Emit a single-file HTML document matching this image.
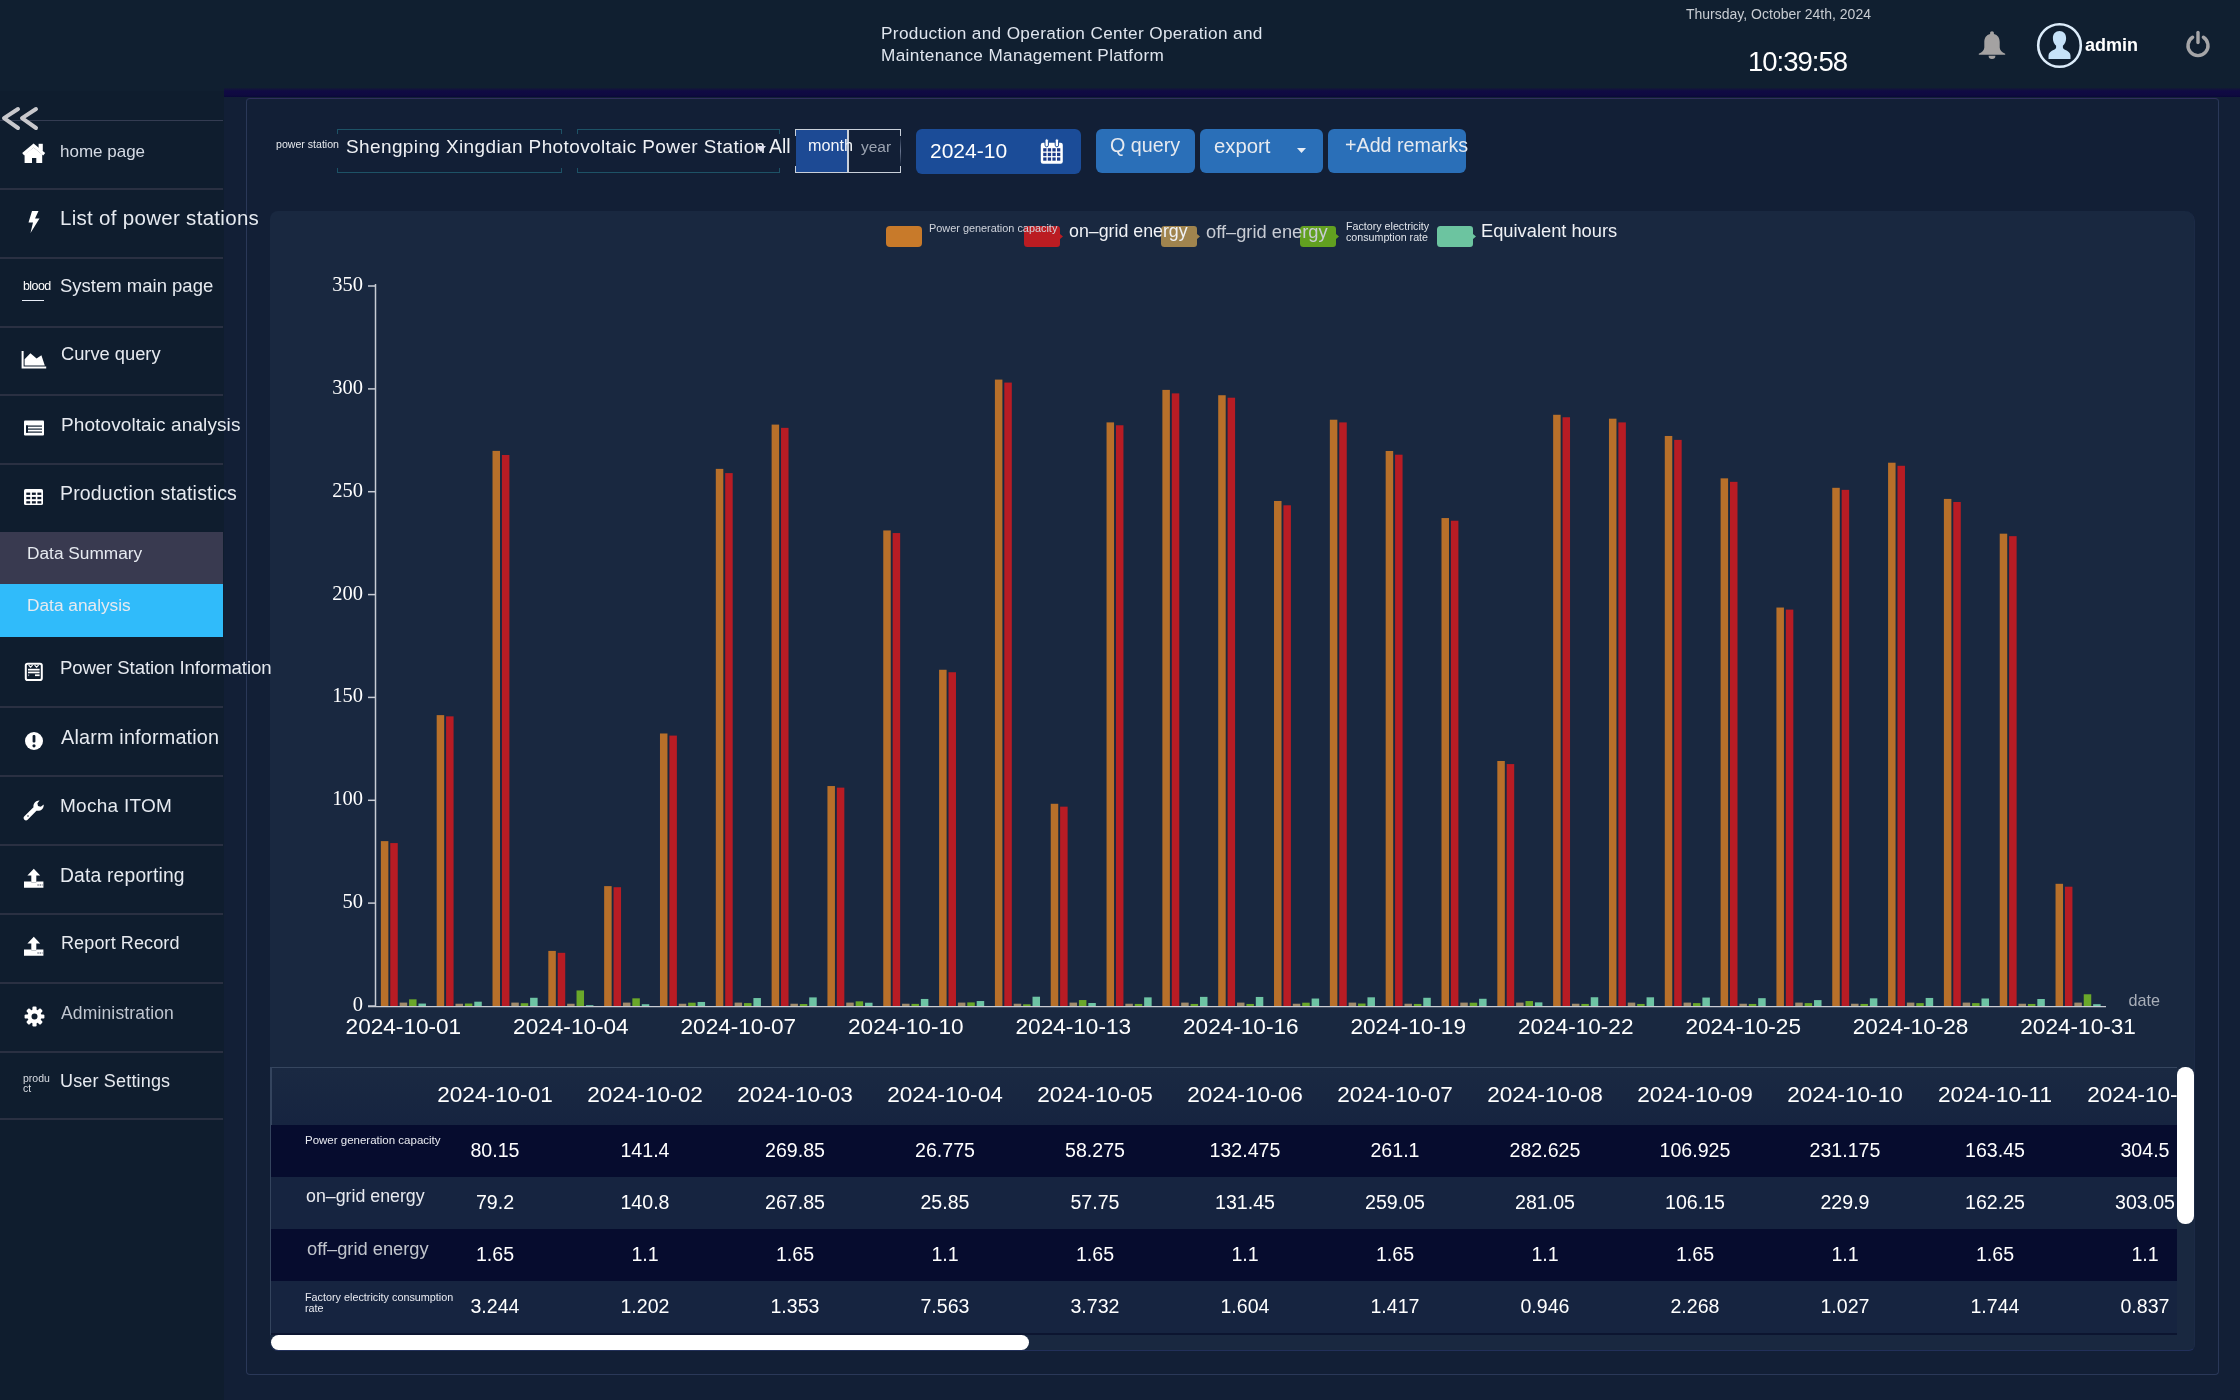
<!DOCTYPE html>
<html><head><meta charset="utf-8">
<style>
*{margin:0;padding:0;box-sizing:border-box}
html,body{width:2240px;height:1400px;overflow:hidden;background:#111e33;font-family:"Liberation Sans",sans-serif;color:#fff}
#wrap{position:absolute;left:0;top:0;width:2240px;height:1400px;will-change:transform}
.abs{position:absolute;white-space:nowrap}
#header{position:absolute;left:0;top:0;width:2240px;height:91px;background:#101f30}
#band{position:absolute;left:224px;top:88px;width:2016px;height:10px;background:linear-gradient(#121a34 0%,#100a44 30%,#0f0a40 70%,#080838 92%,#101838 100%)}
#sidebar{position:absolute;left:0;top:91px;width:224px;height:1309px;background:#0f1d2e}
.sep{position:absolute;left:0;width:223px;height:2px;background:#2a3042}
.st{position:absolute;white-space:nowrap;color:#e6eaf0;line-height:1}
.ic{position:absolute}
#main{position:absolute;left:224px;top:97px;width:2016px;height:1303px;background:#121f36}
#panel{position:absolute;left:246px;top:98px;width:1973px;height:1277px;border:1px solid #2a3858;border-top:1.5px solid #30305c;border-radius:4px}
#chartbg{position:absolute;left:270px;top:211px;width:1925px;height:1140px;background:#192840;border-right:1px solid #1c2a46;border-bottom:1px solid #22305a;border-radius:8px 10px 6px 8px}
.btn{position:absolute;top:129px;height:44px;background:#2a6fb8;border-radius:6px;color:#fff}
.row{position:absolute;left:271px;width:1906px;height:52px}
.cell{position:absolute;width:150px;text-align:center;font-size:20px;color:#fff;line-height:1}
.lg{position:absolute;top:226px;width:36px;height:21px;border-radius:5px}
</style></head>
<body><div id="wrap">
<div id="header">
  <div class="abs" style="left:881px;top:21.8px;font-size:17.2px;letter-spacing:0.35px;line-height:22px;color:#dfe5ee">Production and Operation Center Operation and<br>Maintenance Management Platform</div>
  <div class="abs" style="left:1686px;top:6px;font-size:14px;color:#c8ccd2">Thursday, October 24th, 2024</div>
  <div class="abs" style="left:1748px;top:46px;font-size:27.5px;color:#fff;letter-spacing:-1.0px">10:39:58</div>
  <!-- bell -->
  <svg class="ic" style="left:1977px;top:30px" width="30" height="30" viewBox="0 0 30 30"><path d="M15 1.2c1.1 0 1.9.8 1.9 1.8v.9c3.9.9 5.8 4 5.8 8.2v5.3c0 2.6 2 4.4 5.5 6.4v.9H1.8v-.9c3.5-2 5.5-3.8 5.5-6.4v-5.3c0-4.2 1.9-7.3 5.8-8.2V3c0-1 .8-1.8 1.9-1.8z" fill="#a4a2a2"/><path d="M11.6 25.8h6.8a3.4 3.2 0 0 1-6.8 0z" fill="#a4a2a2"/></svg>
  <!-- avatar -->
  <svg class="ic" style="left:2036px;top:22px" width="48" height="48" viewBox="0 0 48 48"><circle cx="23.5" cy="23.5" r="21.3" fill="none" stroke="#dcecfa" stroke-width="2.6"/><path d="M23.5 9c4 0 6.6 3 6.6 7.3 0 3.2-1.2 5.8-3.2 7.4v1.6c0 1 .6 1.6 1.6 2.1 3.9 1.6 6 3.3 6 6.4v3.2H12.5v-3.2c0-3.1 2.1-4.8 6-6.4 1-.5 1.6-1.1 1.6-2.1v-1.6c-2-1.6-3.2-4.2-3.2-7.4 0-4.3 2.6-7.3 6.6-7.3z" fill="#c6e2f8"/></svg>
  <div class="abs" style="left:2085px;top:35px;font-size:18px;font-weight:bold;color:#fff">admin</div>
  <!-- power -->
  <svg class="ic" style="left:2183px;top:29px" width="30" height="30" viewBox="0 0 30 30"><path d="M9.6 8.2A10 10 0 1 0 20.4 8.2" fill="none" stroke="#a6a6a8" stroke-width="3.4" stroke-linecap="round"/><line x1="15" y1="3.5" x2="15" y2="13.5" stroke="#a6a6a8" stroke-width="3.4" stroke-linecap="round"/></svg>
</div>
<div id="band"></div>
<div id="sidebar"></div>
<div id="main"></div>
<div id="panel"></div>
<div id="chartbg"></div>

<!-- SIDEBAR CONTENT -->

<div class="sep" style="top:120px;height:1.2px;left:0;width:223px;background:#343c52"></div>
<svg class="ic" style="left:-1px;top:105px" width="40" height="28" viewBox="0 0 40 28"><path d="M19 4L5 13.2 19 23M37 4L23 13.2 37 23" fill="none" stroke="#c8c8cc" stroke-width="4" stroke-linecap="round" stroke-linejoin="round"/></svg>
<div class="sep" style="top:188px"></div>
<div class="sep" style="top:257px"></div>
<div class="sep" style="top:326px"></div>
<div class="sep" style="top:394px"></div>
<div class="sep" style="top:463px"></div>
<div class="abs" style="left:0;top:532px;width:223px;height:52px;background:#393a50"></div>
<div class="abs" style="left:0;top:584px;width:223px;height:53px;background:#30bbfa"></div>
<div class="sep" style="top:706px"></div>
<div class="sep" style="top:775px"></div>
<div class="sep" style="top:844px"></div>
<div class="sep" style="top:913px"></div>
<div class="sep" style="top:982px"></div>
<div class="sep" style="top:1051px"></div>
<div class="sep" style="top:1118px"></div>

<div class="st" style="left:60px;top:143px;font-size:17px;color:#d4dae4">home page</div>
<div class="st" style="left:60px;top:208px;font-size:20.5px;letter-spacing:0.3px">List of power stations</div>
<div class="st" style="left:60px;top:277px;font-size:18.5px">System main page</div>
<div class="st" style="left:61px;top:345px;font-size:18.3px">Curve query</div>
<div class="st" style="left:61px;top:415px;font-size:19px;letter-spacing:0.1px">Photovoltaic analysis</div>
<div class="st" style="left:60px;top:484px;font-size:19.5px;letter-spacing:0.17px">Production statistics</div>
<div class="st" style="left:27px;top:545px;font-size:17.3px">Data Summary</div>
<div class="st" style="left:27px;top:597px;font-size:17.3px">Data analysis</div>
<div class="st" style="left:60px;top:658.5px;font-size:18.6px;letter-spacing:-0.1px">Power Station Information</div>
<div class="st" style="left:61px;top:727.5px;font-size:19.8px;letter-spacing:0.19px">Alarm information</div>
<div class="st" style="left:60px;top:796px;font-size:19px;letter-spacing:0.27px">Mocha ITOM</div>
<div class="st" style="left:60px;top:865.5px;font-size:19.3px;letter-spacing:0.18px">Data reporting</div>
<div class="st" style="left:61px;top:934px;font-size:18px;letter-spacing:0.12px">Report Record</div>
<div class="st" style="left:61px;top:1004.5px;font-size:17.5px;letter-spacing:0.15px;color:#c0c6d0">Administration</div>
<div class="st" style="left:60px;top:1072px;font-size:18px;letter-spacing:0.17px">User Settings</div>

<!-- sidebar icons -->
<svg class="ic" style="left:21px;top:141px" width="26" height="23" viewBox="0 0 26 23"><rect x="17.6" y="2.8" width="4.2" height="7" fill="#fff"/><path d="M2.2 13.2L12.6 4.6 23.2 13.2" fill="none" stroke="#fff" stroke-width="3.2"/><path d="M3.6 13.4L12.6 6.4 21.2 13.4V22H15.3V17H11V22H3.6z" fill="#fff"/></svg>
<svg class="ic" style="left:27px;top:210px" width="14" height="24" viewBox="0 0 14 24"><path d="M5 1h6.5L8 8.5h4.5L3.5 23 6 12.5H1.5z" fill="#fff"/></svg>
<div class="st" style="left:23px;top:280px;font-size:12.5px;letter-spacing:-0.6px;color:#fff">blood</div>
<div class="abs" style="left:22px;top:299.6px;width:22px;height:1.2px;background:#e8eef8"></div>
<svg class="ic" style="left:21px;top:349px" width="26" height="21" viewBox="0 0 26 21"><path d="M1.6 2v16.4H25.2" fill="none" stroke="#fff" stroke-width="2"/><path d="M3.6 16.6V10.2L9.4 4.2 15.6 9.6 20.4 6.2 23.8 16.6z" fill="#fff"/></svg>
<svg class="ic" style="left:23px;top:419px" width="22" height="18" viewBox="0 0 22 18"><rect x="1" y="1.5" width="20" height="15" rx="1" fill="#fff"/><rect x="3" y="6.5" width="16" height="1.2" fill="#0f1d2e"/><rect x="3" y="9.5" width="16" height="1.2" fill="#0f1d2e"/><rect x="3" y="12.5" width="16" height="1.2" fill="#0f1d2e"/><rect x="3" y="6.5" width="2" height="7.2" fill="#0f1d2e"/></svg>
<svg class="ic" style="left:24px;top:489px" width="20" height="17" viewBox="0 0 20 17"><rect x="0" y="0" width="19" height="16" rx="1.6" fill="#fff"/><rect x="2.3" y="3.6" width="3.9" height="2.3" fill="#0f1a2c"/><rect x="2.3" y="7.9" width="3.9" height="2.3" fill="#0f1a2c"/><rect x="2.3" y="12.2" width="3.9" height="2.3" fill="#0f1a2c"/><rect x="7.9" y="3.6" width="3.9" height="2.3" fill="#0f1a2c"/><rect x="7.9" y="7.9" width="3.9" height="2.3" fill="#0f1a2c"/><rect x="7.9" y="12.2" width="3.9" height="2.3" fill="#0f1a2c"/><rect x="13.4" y="3.6" width="3.9" height="2.3" fill="#0f1a2c"/><rect x="13.4" y="7.9" width="3.9" height="2.3" fill="#0f1a2c"/><rect x="13.4" y="12.2" width="3.9" height="2.3" fill="#0f1a2c"/></svg>
<svg class="ic" style="left:24px;top:662px" width="20" height="20" viewBox="0 0 20 20"><rect x="1.8" y="1.8" width="16" height="16.2" rx="1.8" fill="none" stroke="#fff" stroke-width="2"/><path d="M4.6 3.2l2 2 2-2M10.6 3.2l2 2 2-2" fill="none" stroke="#fff" stroke-width="1.2"/><rect x="4" y="6.8" width="11.6" height="1.7" fill="#fff"/><rect x="4" y="9.6" width="11.6" height="1.7" fill="#fff"/><rect x="11" y="12.4" width="4.6" height="1.7" fill="#fff"/><rect x="4" y="12.4" width="1.2" height="1.7" fill="#8890a0"/></svg>
<svg class="ic" style="left:24px;top:731px" width="20" height="20" viewBox="0 0 20 20"><circle cx="10" cy="10" r="9" fill="#fff"/><rect x="8.6" y="4" width="2.8" height="7.5" rx="1" fill="#0f1d2e"/><circle cx="10" cy="14.8" r="1.6" fill="#0f1d2e"/></svg>
<svg class="ic" style="left:23px;top:799px" width="22" height="22" viewBox="0 0 22 22"><path d="M3 19l8.6-8.6" stroke="#fff" stroke-width="4.6" stroke-linecap="round"/><path d="M16.6 1.6a5.6 5.6 0 0 0-5.9 7.4l2.4 2.4a5.6 5.6 0 0 0 7.6-5.8l-2.9 2.2-2.8-.9-.6-2.6z" fill="#fff"/><circle cx="5" cy="17" r="0.8" fill="#0f1d2e"/></svg>
<svg class="ic" style="left:23px;top:866px" width="22" height="23" viewBox="0 0 22 23"><path d="M10.8 2.8L4.4 9.6h3.9v6.4h5V9.6h3.9z" fill="#fff"/><path d="M1 15.6h7.3v.6h5v-.6h7.1v6.1H1z" fill="#fff"/><path d="M14.4 19h1.4M16.6 19h1.4M18.8 19h.8" stroke="#3a4458" stroke-width="1.2"/></svg>
<svg class="ic" style="left:23px;top:934px" width="22" height="23" viewBox="0 0 22 23"><path d="M10.8 2.8L4.4 9.6h3.9v6.4h5V9.6h3.9z" fill="#fff"/><path d="M1 15.6h7.3v.6h5v-.6h7.1v6.1H1z" fill="#fff"/><path d="M14.4 19h1.4M16.6 19h1.4M18.8 19h.8" stroke="#3a4458" stroke-width="1.2"/></svg>
<svg class="ic" style="left:23.5px;top:1005.5px" width="21" height="21" viewBox="0 0 21 21"><g fill="#fff"><circle cx="10.5" cy="10.5" r="7"/><rect x="8.4" y="0.6" width="4.2" height="5" rx="1.2" transform="rotate(0 10.5 10.5)"/><rect x="8.4" y="0.6" width="4.2" height="5" rx="1.2" transform="rotate(45 10.5 10.5)"/><rect x="8.4" y="0.6" width="4.2" height="5" rx="1.2" transform="rotate(90 10.5 10.5)"/><rect x="8.4" y="0.6" width="4.2" height="5" rx="1.2" transform="rotate(135 10.5 10.5)"/><rect x="8.4" y="0.6" width="4.2" height="5" rx="1.2" transform="rotate(180 10.5 10.5)"/><rect x="8.4" y="0.6" width="4.2" height="5" rx="1.2" transform="rotate(225 10.5 10.5)"/><rect x="8.4" y="0.6" width="4.2" height="5" rx="1.2" transform="rotate(270 10.5 10.5)"/><rect x="8.4" y="0.6" width="4.2" height="5" rx="1.2" transform="rotate(315 10.5 10.5)"/></g><circle cx="10.5" cy="10.5" r="3" fill="#0f1d2e"/></svg>
<div class="st" style="left:23px;top:1073px;font-size:10.5px;line-height:10px;color:#d8dce2;white-space:normal;width:30px;word-break:break-all">produ<br>ct</div>

<!-- TOOLBAR -->
<div class="st" style="left:276px;top:139px;font-size:10.6px;color:#e6e8ec">power station</div>
<div class="abs" style="left:337px;top:129px;width:225px;height:44px;border-top:1.5px solid #1d5266;border-bottom:1.5px solid #1d5266"></div><div class="abs" style="left:337px;top:129px;width:1px;height:5px;background:#1d5266"></div><div class="abs" style="left:337px;top:168px;width:1px;height:5px;background:#1d5266"></div><div class="abs" style="left:561px;top:129px;width:1px;height:5px;background:#1d5266"></div><div class="abs" style="left:561px;top:168px;width:1px;height:5px;background:#1d5266"></div>
<div class="abs" style="left:577px;top:129px;width:203px;height:44px;border-top:1.5px solid #1d5266;border-bottom:1.5px solid #1d5266"></div><div class="abs" style="left:577px;top:129px;width:1px;height:5px;background:#1d5266"></div><div class="abs" style="left:577px;top:168px;width:1px;height:5px;background:#1d5266"></div><div class="abs" style="left:779px;top:129px;width:1px;height:5px;background:#1d5266"></div><div class="abs" style="left:779px;top:168px;width:1px;height:5px;background:#1d5266"></div>
<div class="st" style="left:346px;top:136.5px;font-size:19px;letter-spacing:0.38px;color:#eef0f4">Shengping Xingdian Photovoltaic Power Station</div>
<svg class="ic" style="left:755px;top:144px" width="12" height="10" viewBox="0 0 12 10"><path d="M1 2h10L6 8z" fill="#dde"/></svg>
<div class="st" style="left:769px;top:136.5px;font-size:19.5px;color:#eef0f4">All</div>
<div class="abs" style="left:795px;top:129px;width:106px;height:44px;border-top:1.5px solid #c9d0da;border-bottom:1.5px solid #c9d0da"></div><div class="abs" style="left:795px;top:129px;width:1.5px;height:7px;background:#c9d0da"></div><div class="abs" style="left:795px;top:166px;width:1.5px;height:7px;background:#c9d0da"></div><div class="abs" style="left:899.5px;top:129px;width:1.5px;height:7px;background:#c9d0da"></div><div class="abs" style="left:899.5px;top:166px;width:1.5px;height:7px;background:#c9d0da"></div><div class="abs" style="left:899.5px;top:136px;width:1.5px;height:30px;background:linear-gradient(#c9d0da00,#6a7690 50%,#c9d0da00)"></div>
<div class="abs" style="left:796px;top:130px;width:52px;height:42px;background:#1d4a94"></div>
<div class="abs" style="left:847px;top:130px;width:2px;height:42px;background:#c9d0da"></div>
<div class="st" style="left:808px;top:136.5px;font-size:16.2px;color:#f4f6fa">month</div>
<div class="st" style="left:861px;top:138.5px;font-size:15.5px;color:#9aa2b0">year</div>
<div class="abs" style="left:916px;top:129px;width:165px;height:45px;background:#1b4c98;border-radius:6px"></div>
<div class="st" style="left:930px;top:139.5px;font-size:21px;color:#fff">2024-10</div>
<svg class="ic" style="left:1040px;top:138px" width="24" height="27" viewBox="0 0 24 27"><rect x="0.8" y="4.8" width="22" height="21" rx="2.2" fill="#fff"/><rect x="3.2" y="10.2" width="3.3" height="3.3" fill="#1b3a88"/><rect x="7.8" y="10.2" width="3.3" height="3.3" fill="#1b3a88"/><rect x="12.4" y="10.2" width="3.3" height="3.3" fill="#1b3a88"/><rect x="17.0" y="10.2" width="3.3" height="3.3" fill="#1b3a88"/><rect x="3.2" y="14.8" width="3.3" height="3.3" fill="#1b3a88"/><rect x="7.8" y="14.8" width="3.3" height="3.3" fill="#1b3a88"/><rect x="12.4" y="14.8" width="3.3" height="3.3" fill="#1b3a88"/><rect x="17.0" y="14.8" width="3.3" height="3.3" fill="#1b3a88"/><rect x="3.2" y="19.4" width="3.3" height="3.3" fill="#1b3a88"/><rect x="7.8" y="19.4" width="3.3" height="3.3" fill="#1b3a88"/><rect x="12.4" y="19.4" width="3.3" height="3.3" fill="#1b3a88"/><rect x="17.0" y="19.4" width="3.3" height="3.3" fill="#1b3a88"/><rect x="5" y="0.8" width="3.4" height="8" rx="1.7" fill="#fff" stroke="#1b4c98" stroke-width="1"/><rect x="15.2" y="0.8" width="3.4" height="8" rx="1.7" fill="#fff" stroke="#1b4c98" stroke-width="1"/></svg>
<div class="btn" style="left:1096px;width:99px"></div>
<div class="st" style="left:1110px;top:136px;font-size:19.7px">Q query</div>
<div class="btn" style="left:1200px;width:123px"></div>
<div class="st" style="left:1214px;top:135.5px;font-size:20.3px">export</div>
<svg class="ic" style="left:1296px;top:146px" width="11" height="9" viewBox="0 0 11 9"><path d="M1 2h9L5.5 7z" fill="#e8eef6"/></svg>
<div class="btn" style="left:1328px;width:138px"></div>
<div class="st" style="left:1345px;top:136px;font-size:19.7px">+Add remarks</div>

<!-- LEGEND -->
<div class="lg" style="left:886px;background:#c87a2a;border-radius:4px"></div>
<svg class="ic" style="left:1024px;top:226px" width="42" height="21" viewBox="0 0 42 21"><path d="M3.5 0H33a3 3 0 0 1 3 3v5l3 2.5-3 2.5v5a3 3 0 0 1-3 3H3.5A3.5 3.5 0 0 1 0 17.5v-14A3.5 3.5 0 0 1 3.5 0z" fill="#bb1c22"/></svg>
<svg class="ic" style="left:1161px;top:226px" width="42" height="21" viewBox="0 0 42 21"><path d="M3.5 0H33a3 3 0 0 1 3 3v5l3 2.5-3 2.5v5a3 3 0 0 1-3 3H3.5A3.5 3.5 0 0 1 0 17.5v-14A3.5 3.5 0 0 1 3.5 0z" fill="#a0844e"/></svg>
<svg class="ic" style="left:1300px;top:226px" width="42" height="21" viewBox="0 0 42 21"><path d="M3.5 0H33a3 3 0 0 1 3 3v5l3 2.5-3 2.5v5a3 3 0 0 1-3 3H3.5A3.5 3.5 0 0 1 0 17.5v-14A3.5 3.5 0 0 1 3.5 0z" fill="#62a020"/></svg>
<svg class="ic" style="left:1437px;top:226px" width="42" height="21" viewBox="0 0 42 21"><path d="M3.5 0H33a3 3 0 0 1 3 3v5l3 2.5-3 2.5v5a3 3 0 0 1-3 3H3.5A3.5 3.5 0 0 1 0 17.5v-14A3.5 3.5 0 0 1 3.5 0z" fill="#6cc4a0"/></svg>
<div class="st" style="left:929px;top:223px;font-size:10.9px;color:#d0d4dc">Power generation capacity</div>
<div class="st" style="left:1069px;top:223px;font-size:17.8px;color:#f0f2f6">on–grid energy</div>
<div class="st" style="left:1206px;top:223px;font-size:18.3px;color:#c8ccd4">off–grid energy</div>
<div class="st" style="left:1346px;top:221px;font-size:10.7px;line-height:11px;color:#e0e4ea">Factory electricity<br>consumption rate</div>
<div class="st" style="left:1481px;top:222px;font-size:18.3px;color:#f0f2f6">Equivalent hours</div>

<svg width="2240" height="1400" style="position:absolute;left:0;top:0"><rect x="380.86" y="841.12" width="7.5" height="164.88" fill="#b8702a"/><rect x="390.26" y="843.07" width="7.5" height="162.93" fill="#b81c24"/><rect x="399.66" y="1002.61" width="7.5" height="3.39" fill="#a08a6a"/><rect x="409.06" y="999.33" width="7.5" height="6.67" fill="#6aa82a"/><rect x="418.46" y="1003.56" width="7.5" height="2.44" fill="#6ec4a4"/><rect x="436.68" y="715.12" width="7.5" height="290.88" fill="#b8702a"/><rect x="446.08" y="716.35" width="7.5" height="289.65" fill="#b81c24"/><rect x="455.48" y="1003.74" width="7.5" height="2.26" fill="#a08a6a"/><rect x="464.88" y="1003.53" width="7.5" height="2.47" fill="#6aa82a"/><rect x="474.28" y="1001.69" width="7.5" height="4.31" fill="#6ec4a4"/><rect x="492.51" y="450.88" width="7.5" height="555.12" fill="#b8702a"/><rect x="501.91" y="454.99" width="7.5" height="551.01" fill="#b81c24"/><rect x="511.31" y="1002.61" width="7.5" height="3.39" fill="#a08a6a"/><rect x="520.71" y="1003.22" width="7.5" height="2.78" fill="#6aa82a"/><rect x="530.11" y="997.78" width="7.5" height="8.22" fill="#6ec4a4"/><rect x="548.33" y="950.92" width="7.5" height="55.08" fill="#b8702a"/><rect x="557.73" y="952.82" width="7.5" height="53.18" fill="#b81c24"/><rect x="567.13" y="1003.74" width="7.5" height="2.26" fill="#a08a6a"/><rect x="576.53" y="990.44" width="7.5" height="15.56" fill="#6aa82a"/><rect x="585.93" y="1005.18" width="7.5" height="0.82" fill="#6ec4a4"/><rect x="604.15" y="886.12" width="7.5" height="119.88" fill="#b8702a"/><rect x="613.55" y="887.20" width="7.5" height="118.80" fill="#b81c24"/><rect x="622.95" y="1002.61" width="7.5" height="3.39" fill="#a08a6a"/><rect x="632.35" y="998.32" width="7.5" height="7.68" fill="#6aa82a"/><rect x="641.75" y="1004.22" width="7.5" height="1.78" fill="#6ec4a4"/><rect x="659.97" y="733.48" width="7.5" height="272.52" fill="#b8702a"/><rect x="669.37" y="735.59" width="7.5" height="270.41" fill="#b81c24"/><rect x="678.77" y="1003.74" width="7.5" height="2.26" fill="#a08a6a"/><rect x="688.17" y="1002.70" width="7.5" height="3.30" fill="#6aa82a"/><rect x="697.57" y="1001.96" width="7.5" height="4.04" fill="#6ec4a4"/><rect x="715.80" y="468.88" width="7.5" height="537.12" fill="#b8702a"/><rect x="725.20" y="473.10" width="7.5" height="532.90" fill="#b81c24"/><rect x="734.60" y="1002.61" width="7.5" height="3.39" fill="#a08a6a"/><rect x="744.00" y="1003.09" width="7.5" height="2.91" fill="#6aa82a"/><rect x="753.40" y="998.04" width="7.5" height="7.96" fill="#6ec4a4"/><rect x="771.62" y="424.60" width="7.5" height="581.40" fill="#b8702a"/><rect x="781.02" y="427.84" width="7.5" height="578.16" fill="#b81c24"/><rect x="790.42" y="1003.74" width="7.5" height="2.26" fill="#a08a6a"/><rect x="799.82" y="1004.05" width="7.5" height="1.95" fill="#6aa82a"/><rect x="809.22" y="997.39" width="7.5" height="8.61" fill="#6ec4a4"/><rect x="827.44" y="786.04" width="7.5" height="219.96" fill="#b8702a"/><rect x="836.84" y="787.63" width="7.5" height="218.37" fill="#b81c24"/><rect x="846.24" y="1002.61" width="7.5" height="3.39" fill="#a08a6a"/><rect x="855.64" y="1001.33" width="7.5" height="4.67" fill="#6aa82a"/><rect x="865.04" y="1002.74" width="7.5" height="3.26" fill="#6ec4a4"/><rect x="883.26" y="530.44" width="7.5" height="475.56" fill="#b8702a"/><rect x="892.66" y="533.06" width="7.5" height="472.94" fill="#b81c24"/><rect x="902.06" y="1003.74" width="7.5" height="2.26" fill="#a08a6a"/><rect x="911.46" y="1003.89" width="7.5" height="2.11" fill="#6aa82a"/><rect x="920.86" y="998.95" width="7.5" height="7.05" fill="#6ec4a4"/><rect x="939.09" y="669.76" width="7.5" height="336.24" fill="#b8702a"/><rect x="948.49" y="672.23" width="7.5" height="333.77" fill="#b81c24"/><rect x="957.89" y="1002.61" width="7.5" height="3.39" fill="#a08a6a"/><rect x="967.29" y="1002.41" width="7.5" height="3.59" fill="#6aa82a"/><rect x="976.69" y="1001.02" width="7.5" height="4.98" fill="#6ec4a4"/><rect x="994.91" y="379.60" width="7.5" height="626.40" fill="#b8702a"/><rect x="1004.31" y="382.58" width="7.5" height="623.42" fill="#b81c24"/><rect x="1013.71" y="1003.74" width="7.5" height="2.26" fill="#a08a6a"/><rect x="1023.11" y="1004.28" width="7.5" height="1.72" fill="#6aa82a"/><rect x="1032.51" y="996.72" width="7.5" height="9.28" fill="#6ec4a4"/><rect x="1050.73" y="803.78" width="7.5" height="202.22" fill="#b8702a"/><rect x="1060.13" y="806.66" width="7.5" height="199.34" fill="#b81c24"/><rect x="1069.53" y="1002.61" width="7.5" height="3.39" fill="#a08a6a"/><rect x="1078.93" y="1000.03" width="7.5" height="5.97" fill="#6aa82a"/><rect x="1088.33" y="1003.00" width="7.5" height="3.00" fill="#6ec4a4"/><rect x="1106.55" y="422.39" width="7.5" height="583.61" fill="#b8702a"/><rect x="1115.95" y="425.27" width="7.5" height="580.73" fill="#b81c24"/><rect x="1125.35" y="1003.74" width="7.5" height="2.26" fill="#a08a6a"/><rect x="1134.75" y="1003.94" width="7.5" height="2.06" fill="#6aa82a"/><rect x="1144.15" y="997.35" width="7.5" height="8.65" fill="#6ec4a4"/><rect x="1162.38" y="389.89" width="7.5" height="616.11" fill="#b8702a"/><rect x="1171.78" y="393.38" width="7.5" height="612.62" fill="#b81c24"/><rect x="1181.18" y="1002.61" width="7.5" height="3.39" fill="#a08a6a"/><rect x="1190.58" y="1003.94" width="7.5" height="2.06" fill="#6aa82a"/><rect x="1199.98" y="996.87" width="7.5" height="9.13" fill="#6ec4a4"/><rect x="1218.20" y="395.23" width="7.5" height="610.77" fill="#b8702a"/><rect x="1227.60" y="397.70" width="7.5" height="608.30" fill="#b81c24"/><rect x="1237.00" y="1002.61" width="7.5" height="3.39" fill="#a08a6a"/><rect x="1246.40" y="1003.94" width="7.5" height="2.06" fill="#6aa82a"/><rect x="1255.80" y="996.95" width="7.5" height="9.05" fill="#6ec4a4"/><rect x="1274.02" y="500.97" width="7.5" height="505.03" fill="#b8702a"/><rect x="1283.42" y="505.29" width="7.5" height="500.71" fill="#b81c24"/><rect x="1292.82" y="1003.74" width="7.5" height="2.26" fill="#a08a6a"/><rect x="1302.22" y="1002.71" width="7.5" height="3.29" fill="#6aa82a"/><rect x="1311.62" y="998.52" width="7.5" height="7.48" fill="#6ec4a4"/><rect x="1329.85" y="419.71" width="7.5" height="586.29" fill="#b8702a"/><rect x="1339.25" y="422.39" width="7.5" height="583.61" fill="#b81c24"/><rect x="1348.65" y="1002.61" width="7.5" height="3.39" fill="#a08a6a"/><rect x="1358.05" y="1003.53" width="7.5" height="2.47" fill="#6aa82a"/><rect x="1367.45" y="997.31" width="7.5" height="8.69" fill="#6ec4a4"/><rect x="1385.67" y="450.98" width="7.5" height="555.02" fill="#b8702a"/><rect x="1395.07" y="454.69" width="7.5" height="551.31" fill="#b81c24"/><rect x="1404.47" y="1003.74" width="7.5" height="2.26" fill="#a08a6a"/><rect x="1413.87" y="1003.94" width="7.5" height="2.06" fill="#6aa82a"/><rect x="1423.27" y="997.78" width="7.5" height="8.22" fill="#6ec4a4"/><rect x="1441.49" y="518.05" width="7.5" height="487.95" fill="#b8702a"/><rect x="1450.89" y="520.72" width="7.5" height="485.28" fill="#b81c24"/><rect x="1460.29" y="1002.61" width="7.5" height="3.39" fill="#a08a6a"/><rect x="1469.69" y="1002.71" width="7.5" height="3.29" fill="#6aa82a"/><rect x="1479.09" y="998.77" width="7.5" height="7.23" fill="#6ec4a4"/><rect x="1497.31" y="760.99" width="7.5" height="245.01" fill="#b8702a"/><rect x="1506.71" y="764.08" width="7.5" height="241.92" fill="#b81c24"/><rect x="1516.11" y="1002.61" width="7.5" height="3.39" fill="#a08a6a"/><rect x="1525.51" y="1001.06" width="7.5" height="4.94" fill="#6aa82a"/><rect x="1534.91" y="1002.37" width="7.5" height="3.63" fill="#6ec4a4"/><rect x="1553.14" y="414.78" width="7.5" height="591.22" fill="#b8702a"/><rect x="1562.54" y="417.25" width="7.5" height="588.75" fill="#b81c24"/><rect x="1571.94" y="1003.74" width="7.5" height="2.26" fill="#a08a6a"/><rect x="1581.34" y="1003.94" width="7.5" height="2.06" fill="#6aa82a"/><rect x="1590.74" y="997.24" width="7.5" height="8.76" fill="#6ec4a4"/><rect x="1608.96" y="418.69" width="7.5" height="587.31" fill="#b8702a"/><rect x="1618.36" y="422.39" width="7.5" height="583.61" fill="#b81c24"/><rect x="1627.76" y="1002.61" width="7.5" height="3.39" fill="#a08a6a"/><rect x="1637.16" y="1003.94" width="7.5" height="2.06" fill="#6aa82a"/><rect x="1646.56" y="997.30" width="7.5" height="8.70" fill="#6ec4a4"/><rect x="1664.78" y="435.97" width="7.5" height="570.03" fill="#b8702a"/><rect x="1674.18" y="439.87" width="7.5" height="566.13" fill="#b81c24"/><rect x="1683.58" y="1002.61" width="7.5" height="3.39" fill="#a08a6a"/><rect x="1692.98" y="1003.12" width="7.5" height="2.88" fill="#6aa82a"/><rect x="1702.38" y="997.56" width="7.5" height="8.44" fill="#6ec4a4"/><rect x="1720.60" y="478.34" width="7.5" height="527.66" fill="#b8702a"/><rect x="1730.00" y="481.84" width="7.5" height="524.16" fill="#b81c24"/><rect x="1739.40" y="1003.74" width="7.5" height="2.26" fill="#a08a6a"/><rect x="1748.80" y="1003.94" width="7.5" height="2.06" fill="#6aa82a"/><rect x="1758.20" y="998.18" width="7.5" height="7.82" fill="#6ec4a4"/><rect x="1776.43" y="607.53" width="7.5" height="398.47" fill="#b8702a"/><rect x="1785.83" y="609.59" width="7.5" height="396.41" fill="#b81c24"/><rect x="1795.23" y="1002.61" width="7.5" height="3.39" fill="#a08a6a"/><rect x="1804.63" y="1003.12" width="7.5" height="2.88" fill="#6aa82a"/><rect x="1814.03" y="1000.10" width="7.5" height="5.90" fill="#6ec4a4"/><rect x="1832.25" y="487.81" width="7.5" height="518.19" fill="#b8702a"/><rect x="1841.65" y="489.86" width="7.5" height="516.14" fill="#b81c24"/><rect x="1851.05" y="1003.74" width="7.5" height="2.26" fill="#a08a6a"/><rect x="1860.45" y="1003.94" width="7.5" height="2.06" fill="#6aa82a"/><rect x="1869.85" y="998.32" width="7.5" height="7.68" fill="#6ec4a4"/><rect x="1888.07" y="462.71" width="7.5" height="543.29" fill="#b8702a"/><rect x="1897.47" y="465.79" width="7.5" height="540.21" fill="#b81c24"/><rect x="1906.87" y="1002.61" width="7.5" height="3.39" fill="#a08a6a"/><rect x="1916.27" y="1003.12" width="7.5" height="2.88" fill="#6aa82a"/><rect x="1925.67" y="997.95" width="7.5" height="8.05" fill="#6ec4a4"/><rect x="1943.89" y="498.91" width="7.5" height="507.09" fill="#b8702a"/><rect x="1953.29" y="502.00" width="7.5" height="504.00" fill="#b81c24"/><rect x="1962.69" y="1002.61" width="7.5" height="3.39" fill="#a08a6a"/><rect x="1972.09" y="1003.12" width="7.5" height="2.88" fill="#6aa82a"/><rect x="1981.49" y="998.49" width="7.5" height="7.51" fill="#6ec4a4"/><rect x="1999.72" y="533.68" width="7.5" height="472.32" fill="#b8702a"/><rect x="2009.12" y="536.15" width="7.5" height="469.85" fill="#b81c24"/><rect x="2018.52" y="1003.74" width="7.5" height="2.26" fill="#a08a6a"/><rect x="2027.92" y="1003.94" width="7.5" height="2.06" fill="#6aa82a"/><rect x="2037.32" y="999.00" width="7.5" height="7.00" fill="#6ec4a4"/><rect x="2055.54" y="883.81" width="7.5" height="122.19" fill="#b8702a"/><rect x="2064.94" y="886.69" width="7.5" height="119.31" fill="#b81c24"/><rect x="2074.34" y="1002.61" width="7.5" height="3.39" fill="#a08a6a"/><rect x="2083.74" y="994.27" width="7.5" height="11.73" fill="#6aa82a"/><rect x="2093.14" y="1004.19" width="7.5" height="1.81" fill="#6ec4a4"/><line x1="375.5" y1="284" x2="375.5" y2="1006" stroke="#c8ccd4" stroke-width="1.5"/><line x1="368" y1="1006.6" x2="2106" y2="1006.6" stroke="#c8ccd4" stroke-width="1.3"/><line x1="368" y1="1006.0" x2="375.5" y2="1006.0" stroke="#c8ccd4" stroke-width="1.5"/><text x="363" y="1011.0" text-anchor="end" font-family="Liberation Serif" font-size="20.5" fill="#fff">0</text><line x1="368" y1="903.1" x2="375.5" y2="903.1" stroke="#c8ccd4" stroke-width="1.5"/><text x="363" y="908.1" text-anchor="end" font-family="Liberation Serif" font-size="20.5" fill="#fff">50</text><line x1="368" y1="800.3" x2="375.5" y2="800.3" stroke="#c8ccd4" stroke-width="1.5"/><text x="363" y="805.3" text-anchor="end" font-family="Liberation Serif" font-size="20.5" fill="#fff">100</text><line x1="368" y1="697.4" x2="375.5" y2="697.4" stroke="#c8ccd4" stroke-width="1.5"/><text x="363" y="702.4" text-anchor="end" font-family="Liberation Serif" font-size="20.5" fill="#fff">150</text><line x1="368" y1="594.6" x2="375.5" y2="594.6" stroke="#c8ccd4" stroke-width="1.5"/><text x="363" y="599.6" text-anchor="end" font-family="Liberation Serif" font-size="20.5" fill="#fff">200</text><line x1="368" y1="491.7" x2="375.5" y2="491.7" stroke="#c8ccd4" stroke-width="1.5"/><text x="363" y="496.7" text-anchor="end" font-family="Liberation Serif" font-size="20.5" fill="#fff">250</text><line x1="368" y1="388.9" x2="375.5" y2="388.9" stroke="#c8ccd4" stroke-width="1.5"/><text x="363" y="393.9" text-anchor="end" font-family="Liberation Serif" font-size="20.5" fill="#fff">300</text><line x1="368" y1="286.0" x2="375.5" y2="286.0" stroke="#c8ccd4" stroke-width="1.5"/><text x="363" y="291.0" text-anchor="end" font-family="Liberation Serif" font-size="20.5" fill="#fff">350</text><text x="403.4" y="1034" text-anchor="middle" font-family="Liberation Sans" font-size="22.6" fill="#fff">2024-10-01</text><text x="570.9" y="1034" text-anchor="middle" font-family="Liberation Sans" font-size="22.6" fill="#fff">2024-10-04</text><text x="738.3" y="1034" text-anchor="middle" font-family="Liberation Sans" font-size="22.6" fill="#fff">2024-10-07</text><text x="905.8" y="1034" text-anchor="middle" font-family="Liberation Sans" font-size="22.6" fill="#fff">2024-10-10</text><text x="1073.3" y="1034" text-anchor="middle" font-family="Liberation Sans" font-size="22.6" fill="#fff">2024-10-13</text><text x="1240.8" y="1034" text-anchor="middle" font-family="Liberation Sans" font-size="22.6" fill="#fff">2024-10-16</text><text x="1408.2" y="1034" text-anchor="middle" font-family="Liberation Sans" font-size="22.6" fill="#fff">2024-10-19</text><text x="1575.7" y="1034" text-anchor="middle" font-family="Liberation Sans" font-size="22.6" fill="#fff">2024-10-22</text><text x="1743.2" y="1034" text-anchor="middle" font-family="Liberation Sans" font-size="22.6" fill="#fff">2024-10-25</text><text x="1910.6" y="1034" text-anchor="middle" font-family="Liberation Sans" font-size="22.6" fill="#fff">2024-10-28</text><text x="2078.1" y="1034" text-anchor="middle" font-family="Liberation Sans" font-size="22.6" fill="#fff">2024-10-31</text><text x="2128.5" y="1005.5" font-family="Liberation Sans" font-size="16.2" fill="#a8aeb8">date</text></svg>

<!-- TABLE -->
<div class="abs" style="left:271px;top:1067px;width:1906px;height:58px;background:linear-gradient(#1a2942,#162440);border-top:1.5px solid #36465f"></div><div class="abs" style="left:270px;top:1067px;width:1.5px;height:268px;background:#34445e"></div>
<div class="row" style="top:1125px;background:#060c2e"></div>
<div class="row" style="top:1177px;background:#162440"></div>
<div class="row" style="top:1229px;background:#060c2e"></div>
<div class="row" style="top:1281px;background:#162440"></div>
<div class="abs" style="left:271px;top:1333px;width:1906px;height:2px;background:#0c1530"></div>
<div class="abs" style="left:271px;top:1067px;width:1906px;height:283px;overflow:hidden"><div class="cell" style="left:149px;top:17px;font-size:22.6px">2024-10-01</div><div class="cell" style="left:299px;top:17px;font-size:22.6px">2024-10-02</div><div class="cell" style="left:449px;top:17px;font-size:22.6px">2024-10-03</div><div class="cell" style="left:599px;top:17px;font-size:22.6px">2024-10-04</div><div class="cell" style="left:749px;top:17px;font-size:22.6px">2024-10-05</div><div class="cell" style="left:899px;top:17px;font-size:22.6px">2024-10-06</div><div class="cell" style="left:1049px;top:17px;font-size:22.6px">2024-10-07</div><div class="cell" style="left:1199px;top:17px;font-size:22.6px">2024-10-08</div><div class="cell" style="left:1349px;top:17px;font-size:22.6px">2024-10-09</div><div class="cell" style="left:1499px;top:17px;font-size:22.6px">2024-10-10</div><div class="cell" style="left:1649px;top:17px;font-size:22.6px">2024-10-11</div><div class="cell" style="left:1799px;top:17px;font-size:22.6px">2024-10-12</div><div class="cell" style="left:149px;top:74px;font-size:19.6px">80.15</div><div class="cell" style="left:299px;top:74px;font-size:19.6px">141.4</div><div class="cell" style="left:449px;top:74px;font-size:19.6px">269.85</div><div class="cell" style="left:599px;top:74px;font-size:19.6px">26.775</div><div class="cell" style="left:749px;top:74px;font-size:19.6px">58.275</div><div class="cell" style="left:899px;top:74px;font-size:19.6px">132.475</div><div class="cell" style="left:1049px;top:74px;font-size:19.6px">261.1</div><div class="cell" style="left:1199px;top:74px;font-size:19.6px">282.625</div><div class="cell" style="left:1349px;top:74px;font-size:19.6px">106.925</div><div class="cell" style="left:1499px;top:74px;font-size:19.6px">231.175</div><div class="cell" style="left:1649px;top:74px;font-size:19.6px">163.45</div><div class="cell" style="left:1799px;top:74px;font-size:19.6px">304.5</div><div class="cell" style="left:149px;top:126px;font-size:19.6px">79.2</div><div class="cell" style="left:299px;top:126px;font-size:19.6px">140.8</div><div class="cell" style="left:449px;top:126px;font-size:19.6px">267.85</div><div class="cell" style="left:599px;top:126px;font-size:19.6px">25.85</div><div class="cell" style="left:749px;top:126px;font-size:19.6px">57.75</div><div class="cell" style="left:899px;top:126px;font-size:19.6px">131.45</div><div class="cell" style="left:1049px;top:126px;font-size:19.6px">259.05</div><div class="cell" style="left:1199px;top:126px;font-size:19.6px">281.05</div><div class="cell" style="left:1349px;top:126px;font-size:19.6px">106.15</div><div class="cell" style="left:1499px;top:126px;font-size:19.6px">229.9</div><div class="cell" style="left:1649px;top:126px;font-size:19.6px">162.25</div><div class="cell" style="left:1799px;top:126px;font-size:19.6px">303.05</div><div class="cell" style="left:149px;top:178px;font-size:19.6px">1.65</div><div class="cell" style="left:299px;top:178px;font-size:19.6px">1.1</div><div class="cell" style="left:449px;top:178px;font-size:19.6px">1.65</div><div class="cell" style="left:599px;top:178px;font-size:19.6px">1.1</div><div class="cell" style="left:749px;top:178px;font-size:19.6px">1.65</div><div class="cell" style="left:899px;top:178px;font-size:19.6px">1.1</div><div class="cell" style="left:1049px;top:178px;font-size:19.6px">1.65</div><div class="cell" style="left:1199px;top:178px;font-size:19.6px">1.1</div><div class="cell" style="left:1349px;top:178px;font-size:19.6px">1.65</div><div class="cell" style="left:1499px;top:178px;font-size:19.6px">1.1</div><div class="cell" style="left:1649px;top:178px;font-size:19.6px">1.65</div><div class="cell" style="left:1799px;top:178px;font-size:19.6px">1.1</div><div class="cell" style="left:149px;top:230px;font-size:19.6px">3.244</div><div class="cell" style="left:299px;top:230px;font-size:19.6px">1.202</div><div class="cell" style="left:449px;top:230px;font-size:19.6px">1.353</div><div class="cell" style="left:599px;top:230px;font-size:19.6px">7.563</div><div class="cell" style="left:749px;top:230px;font-size:19.6px">3.732</div><div class="cell" style="left:899px;top:230px;font-size:19.6px">1.604</div><div class="cell" style="left:1049px;top:230px;font-size:19.6px">1.417</div><div class="cell" style="left:1199px;top:230px;font-size:19.6px">0.946</div><div class="cell" style="left:1349px;top:230px;font-size:19.6px">2.268</div><div class="cell" style="left:1499px;top:230px;font-size:19.6px">1.027</div><div class="cell" style="left:1649px;top:230px;font-size:19.6px">1.744</div><div class="cell" style="left:1799px;top:230px;font-size:19.6px">0.837</div><div class="st" style="left:34px;top:68px;font-size:11.5px;color:#e8eaf0">Power generation capacity</div><div class="st" style="left:35px;top:121px;font-size:17.8px;color:#e8eaf0">on–grid energy</div><div class="st" style="left:36px;top:173px;font-size:18.3px;color:#c0c4cc">off–grid energy</div><div class="st" style="left:34px;top:225px;font-size:10.8px;line-height:11px;color:#e8eaf0">Factory electricity consumption<br>rate</div></div>
<div class="abs" style="left:271px;top:1335px;width:758px;height:15px;background:#fff;border-radius:8px"></div>
<div class="abs" style="left:2177px;top:1067px;width:17px;height:157px;background:#fff;border-radius:8px"></div>
</div></body></html>
